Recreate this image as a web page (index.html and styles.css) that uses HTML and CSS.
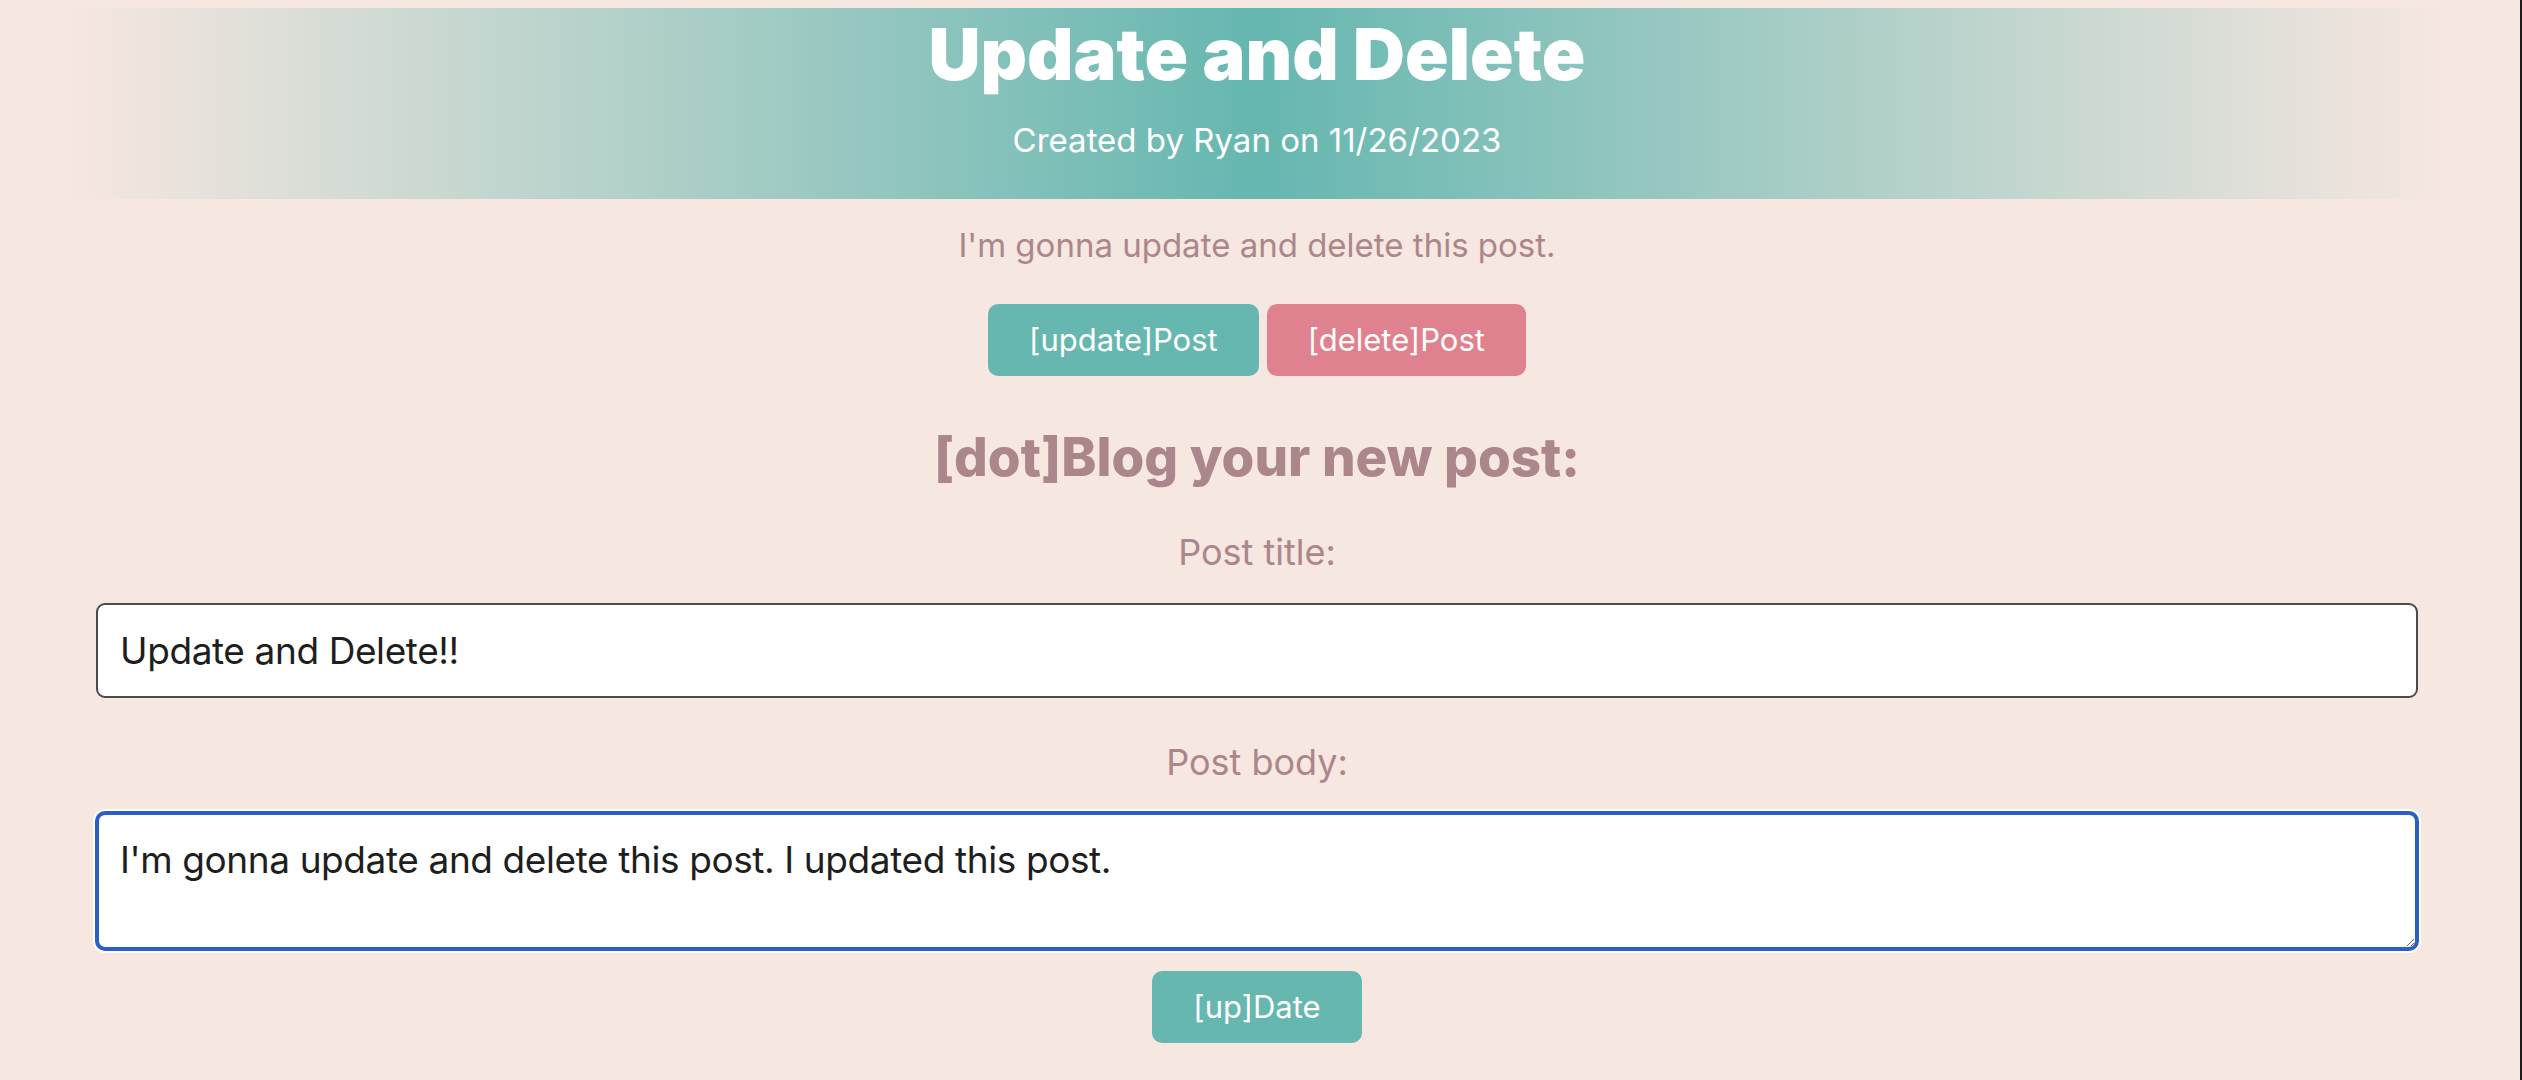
FILE: index.html
```html
<!DOCTYPE html>
<html lang="en">
<head>
<meta charset="utf-8">
<title>Update and Delete</title>
<link rel="stylesheet" href="styles.css">
</head>
<body>
  <header class="hero">
    <h1 class="hero-title">Update and Delete</h1>
    <p class="hero-meta">Created by Ryan on 11/26/2023</p>
  </header>
  <main class="page">
    <p class="post-text">I'm gonna update and delete this post.</p>
    <div class="actions">
      <button class="btn btn-teal" type="button">[update]Post</button>
      <button class="btn btn-pink" type="button">[delete]Post</button>
    </div>
    <form class="post-form">
      <h2 class="form-heading">[dot]Blog your new post:</h2>
      <label class="field-label" for="title">Post title:</label>
      <input class="field-input" id="title" type="text" value="Update and Delete!!">
      <label class="field-label field-label-body" for="body">Post body:</label>
      <textarea class="field-textarea" id="body">I'm gonna update and delete this post. I updated this post.</textarea>
      <button class="btn btn-teal btn-submit" type="button">[up]Date</button>
    </form>
  </main>
</body>
</html>
```
FILE: styles.css
```css
html {
  background: #f6e7e0;
}

body {
  margin: 0;
  padding: 8px 6px 0 0;
  min-height: 100vh;
  box-sizing: border-box;
  border-right: 2px solid #1c1c1c;
  background: #f6e7e0;
  font-family: Inter, "Liberation Sans", sans-serif;
  color: #ab868b;
}

.hero {
  margin: 0 72px;
  padding: 2px 0 33px;
  text-align: center;
  background: linear-gradient(90deg, #f6e7e0 0%, #65b7b0 50%, #f6e7e0 100%);
  color: #ffffff;
}

.hero-title {
  margin: 0;
  font-size: 72px;
  line-height: 88px;
  font-weight: 900;
}

.hero-meta {
  margin: 17px 0 0;
  font-size: 33px;
  line-height: 51px;
  font-weight: 400;
}

.page {
  display: flex;
  flex-direction: column;
  align-items: center;
}

.post-text {
  margin: 21px 0 0;
  font-size: 33px;
  line-height: 51px;
}

.actions {
  margin-top: 33px;
  display: flex;
  gap: 8px;
}

.btn {
  border: none;
  border-radius: 10px;
  padding: 12px 41px;
  font-family: Inter, "Liberation Sans", sans-serif;
  font-size: 31px;
  line-height: 48px;
  color: #ffffff;
  cursor: pointer;
}

.btn-teal {
  background: #65b7b0;
}

.btn-pink {
  background: #df818e;
}

.post-form {
  align-self: stretch;
  display: flex;
  flex-direction: column;
  align-items: center;
}

.form-heading {
  margin: 50px 0 0;
  font-size: 53px;
  line-height: 62px;
  font-weight: 800;
}

.field-label {
  margin-top: 36px;
  font-size: 36px;
  line-height: 57px;
}

.field-label-body {
  margin-top: 36px;
}

.field-input {
  align-self: stretch;
  margin: 22px 96px 0;
  height: 95px;
  box-sizing: border-box;
  padding: 0 22px;
  border: 2px solid #4b4b4b;
  border-radius: 9px;
  background: #ffffff;
  font-family: Inter, "Liberation Sans", sans-serif;
  font-size: 37px;
  letter-spacing: -0.4px;
  color: #1e1e1e;
}

.field-textarea {
  align-self: stretch;
  margin: 20px 95px 0;
  height: 140px;
  box-sizing: border-box;
  padding: 16px 21px;
  border: 4px solid #2b5fc5;
  border-radius: 10px;
  box-shadow: 0 0 0 2px #ffffff;
  background: #ffffff;
  font-family: Inter, "Liberation Sans", sans-serif;
  font-size: 37px;
  letter-spacing: -0.4px;
  line-height: 57px;
  color: #1e1e1e;
  outline: none;
}

.btn-submit {
  margin-top: 20px;
}
```
